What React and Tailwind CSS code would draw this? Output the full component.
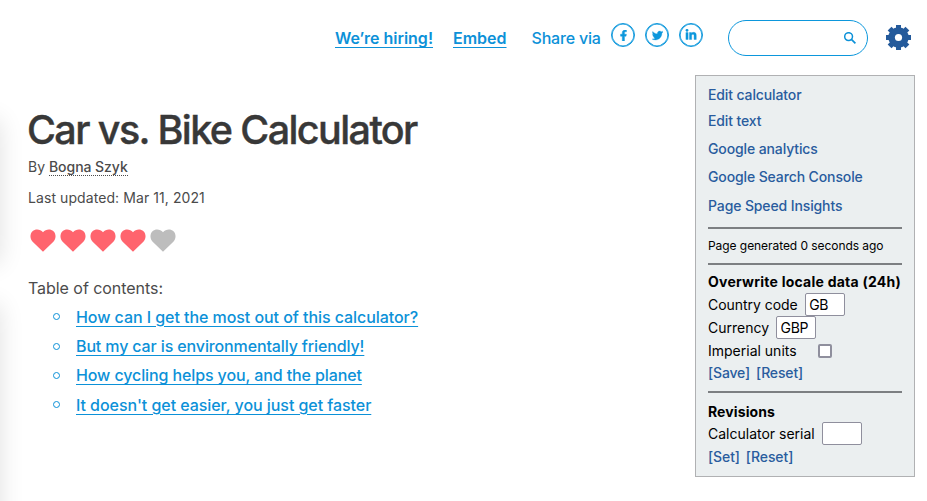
import React from "react";
import { FaFacebookF, FaTwitter, FaLinkedinIn } from "react-icons/fa";

function Heart({ filled }) {
  return (
    <svg viewBox="0 0 26 23" className={`h-[23px] w-[26px] ${filled ? "text-[#ff646e]" : "text-[#bdbdbd]"}`} fill="currentColor">
      <path d="M13 22.8L2.4 12.4C-.3 9.5-.1 4.7 2.5 2.2C5.6-.5 10.4.2 13 3.2C15.6.2 20.4-.5 23.5 2.2C26.1 4.7 26.3 9.5 23.6 12.4Z" />
    </svg>
  );
}

function Gear() {
  return (
    <svg viewBox="-12.5 -12.5 25 25" className="h-[25px] w-[25px]">
      <g fill="#245a9b">
        {[0, 90].map((a) => (
          <rect key={a} x="-2.5" y="-12.5" width="5" height="25" transform={`rotate(${a})`} />
        ))}
        {[45, 135].map((a) => (
          <rect key={a} x="-2.7" y="-12.6" width="5.4" height="25.2" transform={`rotate(${a})`} />
        ))}
        <circle r="10.2" />
      </g>
      <circle r="3.6" fill="white" />
    </svg>
  );
}

function SearchIcon() {
  return (
    <svg viewBox="0 0 12 12" className="size-3" fill="none" stroke="currentColor" strokeWidth="1.5">
      <circle cx="4.6" cy="4.6" r="3.9" />
      <path d="M7.4 7.4L11.4 11.4" strokeWidth="1.7" />
    </svg>
  );
}

function Share({ children }) {
  return <a className="flex size-6 items-center justify-center rounded-full border border-[#0c97dc] shadow-[inset_0_0_0_0.6px_#0c97dc]">{children}</a>;
}

const contents = [
  ["How can I get the most out of this calculator?", "tracking-[-0.06px]"],
  ["But my car is environmentally friendly!", "tracking-[-0.13px]"],
  ["How cycling helps you, and the planet", "tracking-[-0.11px]"],
  ["It doesn't get easier, you just get faster", "tracking-[-0.06px]"],
];

function Field({ label, value, className }) {
  return (
    <div className={`flex h-[23px] items-center ${className}`}>
      <span className="whitespace-nowrap">{label}</span>
      <input defaultValue={value} className="h-[23px] w-10 rounded-[2px] border border-[#8f8f9d] bg-white pl-[3.5px] text-[14px] tracking-[-0.3px] outline-none" />
    </div>
  );
}

export default function App() {
  return (
    <div className="relative h-[501px] w-[927px] overflow-hidden bg-white font-['Inter',sans-serif] text-[#4b4b4b]">
      <div className="absolute top-[120px] -left-10 h-[143px] w-10 shadow-[0_0_24px_rgba(0,0,0,0.12)]" />
      <div className="absolute top-[305px] -left-10 h-[240px] w-10 shadow-[0_0_24px_rgba(0,0,0,0.12)]" />

      <header className="flex h-[75px] text-[16px] text-[#0c91d8]">
        <nav className="flex h-[76px] items-center pl-[335px] whitespace-nowrap">
          <a className="w-[118px] font-semibold underline underline-offset-[3px]">We’re hiring!</a>
          <a className="w-[78.5px] font-semibold tracking-[0px] underline underline-offset-[3px]">Embed</a>
          <span className="w-[79.5px] font-medium tracking-[-0.2px]">Share via</span>
        </nav>
        <div className="flex gap-2.5 pt-[23px] text-[#0c97dc]">
          <Share><FaFacebookF size={11} stroke="currentColor" strokeWidth={20} /></Share>
          <Share><FaTwitter size={11} stroke="currentColor" strokeWidth={12} /></Share>
          <Share><FaLinkedinIn size={12} stroke="currentColor" strokeWidth={16} /></Share>
        </div>
        <div className="mt-5 ml-[25px] flex h-9 w-[140px] items-center justify-end rounded-full border border-[#0c97dc] pr-[11px]">
          <SearchIcon />
        </div>
        <div className="mt-[25px] ml-[18px]"><Gear /></div>
      </header>

      <div className="flex">
        <main className="w-[695px] pl-7">
          <h1 className="mt-[31px] -ml-px h-12 text-[39.5px] leading-[48px] font-medium tracking-[-1.6px] text-[#383838] [-webkit-text-stroke:0.4px_#383838]">Car vs. Bike Calculator</h1>
          <p className="mt-[3px] h-5 text-[14px] leading-5">
            By <a className="inline-block border-b border-dotted border-[#4b4b4b] leading-4 font-medium tracking-[-0.05px]">Bogna Szyk</a>
          </p>
          <p className="mt-[11px] h-5 text-[14px] leading-5 tracking-[0.08px]">Last updated: Mar 11, 2021</p>
          <div className="mt-[20.5px] ml-[2.3px] flex h-[23px] gap-1">
            {[1, 2, 3, 4, 5].map((n) => <Heart key={n} filled={n < 5} />)}
          </div>
          <p className="mt-[24.5px] h-6 text-[16px] leading-6 tracking-[-0.05px]">Table of contents:</p>
          <ul className="mt-[2px] text-[16px] font-medium text-[#0c91d8]">
            {contents.map(([text, tracking]) => (
              <li key={text} className="flex h-[29.4px] items-center">
                <span className="mr-4 ml-[25px] size-[7px] rounded-full border border-[#0c91d8]" />
                <a className={`underline underline-offset-[3px] ${tracking}`}>{text}</a>
              </li>
            ))}
          </ul>
        </main>

        <aside className="h-[402px] w-[220px] border border-[#b0b1b3] bg-[#ebeff0] px-3 text-[14px] leading-5 text-black">
          <div className="flex flex-col pt-[9px] font-medium tracking-[-0.12px] text-[#295c9e]">
            <a className="h-[26px]">Edit calculator</a>
            <a className="h-7">Edit text</a>
            <a className="h-7">Google analytics</a>
            <a className="h-[29px]">Google Search Console</a>
            <a className="h-[31px]">Page Speed Insights</a>
          </div>
          <hr className="h-0.5 border-0 border-t-2 border-[#7c7f82]" />
          <p className="h-[34px] text-[12px] leading-[34px] tracking-[-0.06px]">Page generated 0 seconds ago</p>
          <hr className="h-0.5 border-0 border-t-2 border-[#7c7f82]" />
          <h2 className="mt-[7px] mb-px h-5 font-bold tracking-[0.24px] whitespace-nowrap">Overwrite locale data (24h)</h2>
          <Field label="Country code" value="GB" className="gap-[7px] tracking-[-0.04px]" />
          <Field label="Currency" value="GBP" className="gap-[7px]" />
          <div className="flex h-[23px] items-center gap-[21px]">
            Imperial units
            <span className="size-3.5 rounded-[2px] border-2 border-[#8f8f9d] bg-white" />
          </div>
          <div className="flex h-[22px] items-center gap-1.5 font-medium tracking-[-0.15px] text-[#295c9e]"><a>[Save]</a><a>[Reset]</a></div>
          <hr className="mt-[7px] h-0.5 border-0 border-t-2 border-[#7c7f82]" />
          <h2 className="mt-[9px] h-5 font-bold tracking-[0.1px]">Revisions</h2>
          <Field label="Calculator serial" value="" className="gap-[7px]" />
          <div className="flex h-6 items-center gap-1.5 font-medium tracking-[-0.1px] text-[#295c9e]"><a>[Set]</a><a>[Reset]</a></div>
        </aside>
      </div>
    </div>
  );
}
